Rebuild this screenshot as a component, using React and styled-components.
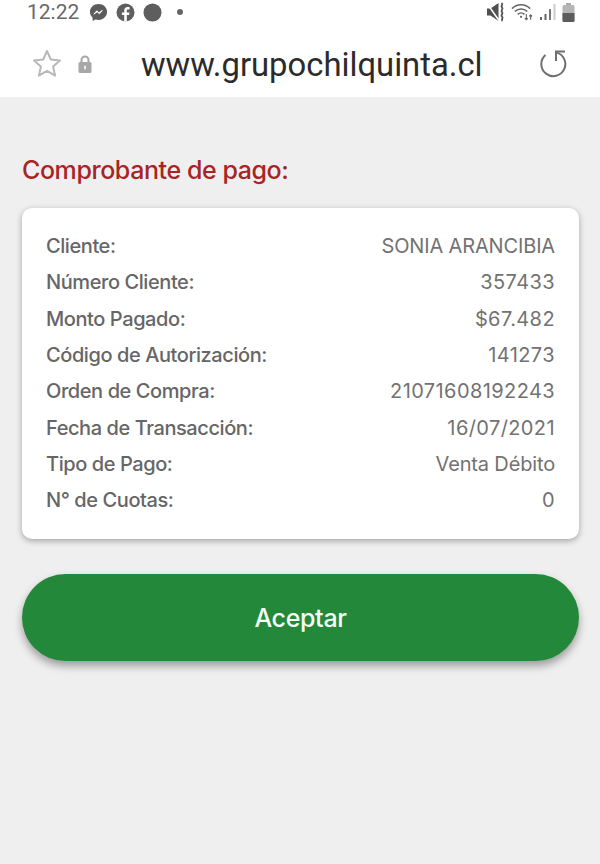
import styled, { createGlobalStyle } from 'styled-components';

const GlobalStyle = createGlobalStyle`
    html, body {
        margin: 0;
        padding: 0;
        background-color: #efefef;
    }
`;

const Page = styled.div`
    width: 600px;
    height: 864px;
    overflow: hidden;
    background-color: #efefef;
    font-family: Inter, "Liberation Sans", sans-serif;
`;

const Header = styled.header`
    height: 97px;
    background-color: #fff;
    display: flex;
    flex-direction: column;
`;

const StatusBar = styled.div`
    height: 24px;
    padding: 0 25px 0 27px;
    display: flex;
    align-items: center;
    justify-content: space-between;
    color: #666;
`;

const StatusGroup = styled.div`
    display: flex;
    align-items: center;
    gap: ${(props) => props.$gap}px;
`;

const Clock = styled.span`
    font-family: Roboto, sans-serif;
    font-size: 21px;
    margin-right: 2px;
    color: #6a6a6a;
`;

const UrlBar = styled.div`
    flex: 1;
    display: flex;
    align-items: center;
    padding: 6px 33px 0 32px;
`;

const UrlText = styled.div`
    flex: 1;
    text-align: center;
    font-family: Roboto, sans-serif;
    font-size: 32.8px;
    color: #2b2b2b;
    padding: 3px 8px 0 0;
`;

const Content = styled.main`
    padding: 56px 21px 0 22px;
`;

const Title = styled.h2`
    margin: 0 0 21px;
    font-size: 25px;
    line-height: 34px;
    font-weight: 550;
    letter-spacing: -0.42px;
    color: #a82424;
`;

const Card = styled.section`
    background-color: #fff;
    border-radius: 10px;
    box-shadow: 0 2px 6px rgba(0, 0, 0, 0.32);
    padding: 20px 24px 21px;
    height: 331px;
    box-sizing: border-box;
`;

const Row = styled.div`
    height: 36.3px;
    display: flex;
    align-items: center;
    justify-content: space-between;
    font-size: 20px;
    color: #666;
`;

const Label = styled.span`
    font-weight: 500;
    letter-spacing: -0.42px;
`;

const Value = styled.span`
    font-weight: 400;
    color: #727272;
    letter-spacing: ${(props) => (props.$numeric ? '0.4px' : '-0.15px')};
`;

const AcceptButton = styled.button`
    display: block;
    width: 100%;
    height: 87px;
    margin-top: 35px;
    border: none;
    border-radius: 43.5px;
    background-color: #23883a;
    color: #f4fff6;
    font-family: inherit;
    font-size: 25px;
    font-weight: 500;
    letter-spacing: -0.35px;
    box-shadow: 0 5px 9px rgba(0, 0, 0, 0.35);
`;

const SmallDot = styled.span`
    width: 6px;
    height: 6px;
    border-radius: 50%;
    background-color: #666;
    margin-left: 7px;
`;

const StarSlot = styled.div`
    display: flex;
    margin-right: 14.5px;
`;

const rows = [
    ['Cliente:', 'SONIA ARANCIBIA'],
    ['Número Cliente:', '357433'],
    ['Monto Pagado:', '$67.482'],
    ['Código de Autorización:', '141273'],
    ['Orden de Compra:', '21071608192243'],
    ['Fecha de Transacción:', '16/07/2021'],
    ['Tipo de Pago:', 'Venta Débito'],
    ['N° de Cuotas:', '0'],
];

const MessengerIcon = () => (
    <svg width="19" height="19" viewBox="0 0 20 20">
        <path d="M10 1C4.900 1 1 4.600 1 9.300c0 2.500 1 4.600 2.800 6.100V19l3-1.600c1 .3 2.100.4 3.200.4 5.100 0 9-3.700 9-8.500S15.100 1 10 1z" fill="#5c5c5c" />
        <path d="M5 11.800l3.200-3.600 2.300 2 3.600-2.500-3 3.700-2.400-2z" fill="#fff" stroke="#fff" strokeWidth="0.8" />
    </svg>
);

const FacebookIcon = () => (
    <svg width="19" height="19" viewBox="0 0 19 19">
        <circle cx="9.500" cy="9.500" r="9" fill="#5f5f5f" />
        <path d="M10.800 18.500v-6.500h2.300l.4-2.600h-2.700V7.900c0-.8.300-1.300 1.400-1.300h1.400V4.300c-.5-.1-1.200-.2-2-.2-2 0-3.400 1.200-3.400 3.500v1.800H5.900V12h2.300v6.500z" fill="#fff" />
    </svg>
);

const DotIcon = () => (
    <svg width="19" height="19" viewBox="0 0 20 20">
        <circle cx="10" cy="10" r="9.500" fill="#5e5e5e" />
    </svg>
);

const MuteIcon = () => (
    <svg width="18" height="20" viewBox="0 0 18 20" fill="none">
        <path d="M0 6.500h3.500L11.500 1v18l-8-5.500H0z" fill="#505050" />
        <path d="M0 1.500l12 17" stroke="#fff" strokeWidth="1.500" />
        <path d="M14.500 1c2.500 2-1.500 3 .5 4.500s-2 3 0 4.500-2 3 0 4.500-1.500 3 .5 4.500" stroke="#505050" strokeWidth="1.800" />
    </svg>
);

const WifiIcon = () => (
    <svg width="23" height="20" viewBox="0 0 24 20" fill="none" stroke="#666" strokeWidth="1.700">
        <path d="M1 6.500C6 1 15 1 20 6.500" />
        <path d="M4 9.500c3.500-3.500 9.500-3.500 13 0" />
        <path d="M7 12.500c2-2 5-2 7 0" />
        <circle cx="10.500" cy="15" r="1.200" fill="#666" stroke="none" />
        <path d="M16 12v6M14.500 16.500l1.500 1.500 1.500-1.500M20.500 18v-5M19 14.500l1.500-1.500 1.500 1.500" strokeWidth="1.200" />
    </svg>
);

const SignalIcon = () => (
    <svg width="16" height="18" viewBox="0 0 16 18">
        <rect x="0" y="14" width="2" height="3" fill="#666" />
        <rect x="4.500" y="11" width="2" height="6" fill="#666" />
        <rect x="9" y="6" width="2" height="11" fill="#777" />
        <rect x="13.500" y="1" width="2" height="16" fill="#ccc" />
    </svg>
);

const BatteryIcon = () => (
    <svg width="13" height="19" viewBox="0 0 13 19">
        <rect x="4" y="0" width="5" height="2" fill="#aaa" />
        <rect x="0.500" y="2" width="12" height="17" rx="1.500" fill="#b5b5b5" />
        <path d="M0.500 10h12v7.500a1.500 1.500 0 0 1-1.500 1.500H2a1.500 1.500 0 0 1-1.500-1.500z" fill="#5c5c5c" />
    </svg>
);

const StarIcon = () => (
    <svg width="30" height="30" viewBox="0 0 30 30" fill="none">
        <path d="M15 2l3.800 8.500 9.200 1-6.900 6.100 2 9-8.100-4.700-8.100 4.700 2-9L2 11.500l9.200-1z" stroke="#b8b8b8" strokeWidth="2" strokeLinejoin="round" />
    </svg>
);

const LockIcon = () => (
    <svg width="16" height="20" viewBox="0 0 16 20" fill="none">
        <path d="M4.500 9V6a3.500 3.500 0 0 1 7 0v3" stroke="#a8a8a8" strokeWidth="2" />
        <rect x="1.500" y="8" width="13" height="11" rx="1.500" fill="#a8a8a8" />
        <rect x="7" y="11.500" width="2" height="4" rx="1" fill="#eee" />
    </svg>
);

const ReloadIcon = () => (
    <svg width="28" height="28" viewBox="0 0 28 28" fill="none" stroke="#6e6e6e" strokeWidth="2">
        <path d="M6.500 5A12 12 0 1 0 17 2.400" />
        <path d="M26 1.500H17V11" />
    </svg>
);

const App = () => {
    return (
        <Page>
            <GlobalStyle />
            <Header>
                <StatusBar>
                    <StatusGroup $gap={8}>
                        <Clock>12:22</Clock>
                        <MessengerIcon />
                        <FacebookIcon />
                        <DotIcon />
                        <SmallDot />
                    </StatusGroup>
                    <StatusGroup $gap={6}>
                        <MuteIcon />
                        <WifiIcon />
                        <SignalIcon />
                        <BatteryIcon />
                    </StatusGroup>
                </StatusBar>
                <UrlBar>
                    <StarSlot><StarIcon /></StarSlot>
                    <LockIcon />
                    <UrlText>www.grupochilquinta.cl</UrlText>
                    <ReloadIcon />
                </UrlBar>
            </Header>
            <Content>
                <Title>Comprobante de pago:</Title>
                <Card>
                    {rows.map(([label, value]) => (
                        <Row key={label}>
                            <Label>{label}</Label>
                            <Value $numeric={/^[$\d]/.test(value)}>{value}</Value>
                        </Row>
                    ))}
                </Card>
                <AcceptButton>Aceptar</AcceptButton>
            </Content>
        </Page>
    );
};

export default App;
